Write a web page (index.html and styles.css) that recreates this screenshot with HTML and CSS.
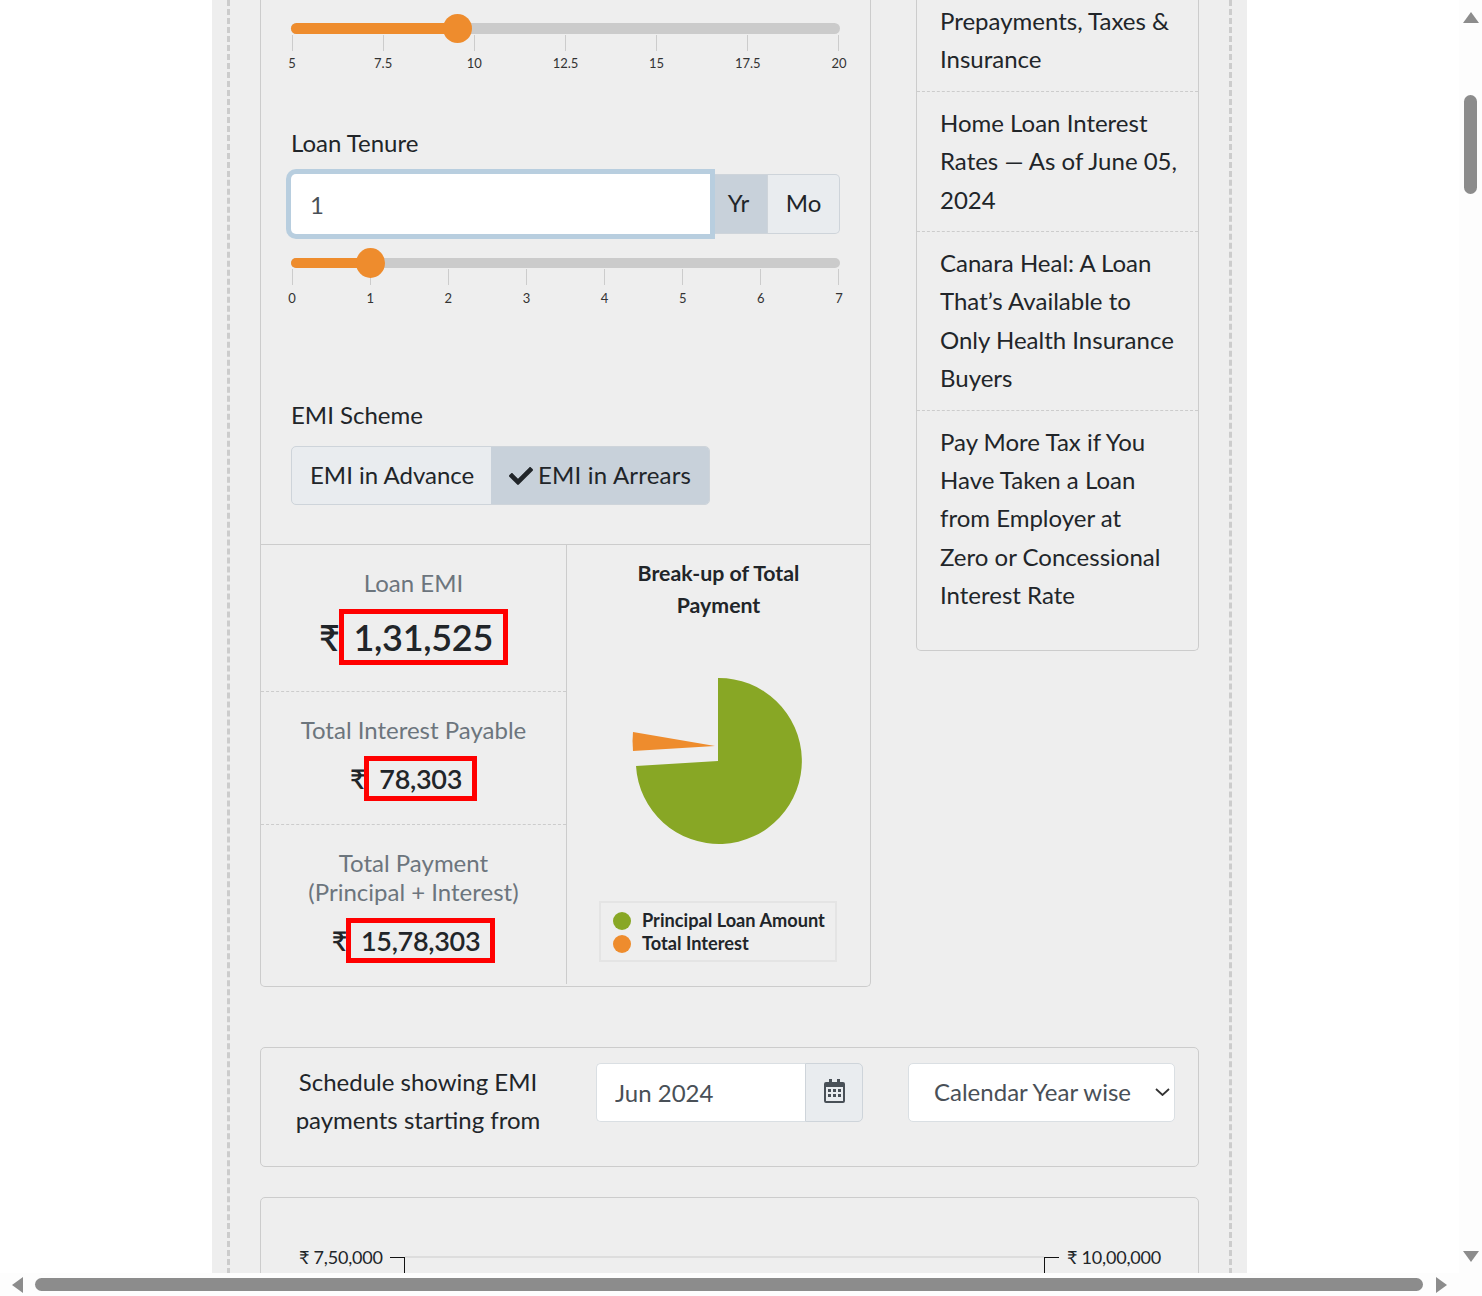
FILE: index.html
```html
<!DOCTYPE html>
<html lang="en">
<head>
  <meta charset="UTF-8">
  <title>EMI Calculator</title>
  <link rel="stylesheet" href="styles.css">
</head>
<body>

<div class="sheet">
  <div class="frame">
    <div class="top-row">

      <div class="calc-card">
        <div class="inputs">
          <div class="slider">
            <div class="track"><div class="fill fill-rate"></div></div>
            <div class="handle handle-rate"></div>
            <div class="ticks">
              <div class="tick"><span>5</span></div>
              <div class="tick"><span>7.5</span></div>
              <div class="tick"><span>10</span></div>
              <div class="tick"><span>12.5</span></div>
              <div class="tick"><span>15</span></div>
              <div class="tick"><span>17.5</span></div>
              <div class="tick"><span>20</span></div>
            </div>
          </div>

          <div class="field-label tenure-label">Loan Tenure</div>
          <div class="tenure-group">
            <input class="tenure-input" type="text" value="1">
            <div class="unit unit-on">Yr</div>
            <div class="unit">Mo</div>
          </div>

          <div class="slider slider-tenure">
            <div class="track"><div class="fill fill-tenure"></div></div>
            <div class="handle handle-tenure"></div>
            <div class="ticks">
              <div class="tick"><span>0</span></div>
              <div class="tick"><span>1</span></div>
              <div class="tick"><span>2</span></div>
              <div class="tick"><span>3</span></div>
              <div class="tick"><span>4</span></div>
              <div class="tick"><span>5</span></div>
              <div class="tick"><span>6</span></div>
              <div class="tick"><span>7</span></div>
            </div>
          </div>

          <div class="field-label scheme-label">EMI Scheme</div>
          <div class="scheme-group">
            <div class="scheme-btn">EMI in Advance</div>
            <div class="scheme-btn scheme-on">
              <svg class="check" viewBox="0 0 512 512"><path d="M173.898 439.404l-166.4-166.4c-9.997-9.997-9.997-26.206 0-36.204l36.203-36.204c9.997-9.998 26.207-9.998 36.204 0L192 312.69 432.095 72.596c9.997-9.997 26.207-9.997 36.204 0l36.203 36.204c9.997 9.997 9.997 26.206 0 36.204l-294.4 294.401c-9.998 9.997-26.207 9.997-36.204-.001z"/></svg>
              EMI in Arrears
            </div>
          </div>
        </div>

        <div class="results">
          <div class="figures">
            <div class="figure figure-emi">
              <div class="figure-label">Loan EMI</div>
              <div class="amount amount-big"><span class="rupee">₹</span><span class="amount-box">1,31,525</span></div>
            </div>
            <div class="figure figure-interest">
              <div class="figure-label">Total Interest Payable</div>
              <div class="amount"><span class="rupee">₹</span><span class="amount-box">78,303</span></div>
            </div>
            <div class="figure figure-total">
              <div class="figure-label">Total Payment<br>(Principal + Interest)</div>
              <div class="amount"><span class="rupee">₹</span><span class="amount-box">15,78,303</span></div>
            </div>
          </div>

          <div class="breakup">
            <div class="breakup-title">Break-up of Total<br>Payment</div>
            <svg class="pie" width="303" height="280" viewBox="0 0 303 280">
              <path fill="#88a725" d="M151 57 A83 83 0 1 1 69 145 L151 140 Z"/>
              <path fill="#ee8c2d" d="M148 125 L66 111 Q65 120 66 130 Z"/>
            </svg>
            <div class="legend">
              <div class="legend-row"><span class="dot dot-green"></span>Principal Loan Amount</div>
              <div class="legend-row"><span class="dot dot-orange"></span>Total Interest</div>
            </div>
          </div>
        </div>
      </div>

      <div class="side-card">
        <div class="side-item">Prepayments, Taxes &amp; Insurance</div>
        <div class="side-item">Home Loan Interest Rates — As of June 05, 2024</div>
        <div class="side-item">Canara Heal: A Loan That’s Available to Only Health Insurance Buyers</div>
        <div class="side-item side-last">Pay More Tax if You Have Taken a Loan from Employer at<br>Zero or Concessional Interest Rate</div>
      </div>
    </div>

    <div class="schedule-card">
      <div class="schedule-text">Schedule showing EMI payments starting from</div>
      <div class="date-group">
        <input class="date-input" type="text" value="Jun 2024">
        <div class="date-addon">
          <svg class="calendar" width="21" height="24" viewBox="0 0 21 24">
            <path fill="#495057" d="M5 0h3v3h5V0h3v3h3a2 2 0 0 1 2 2v17a2 2 0 0 1-2 2H2a2 2 0 0 1-2-2V5a2 2 0 0 1 2-2h3z"/>
            <rect x="2" y="8" width="17" height="14" fill="#e9ecef"/>
            <path fill="#495057" d="M4 10h3v3H4zM9 10h3v3H9zM14 10h3v3h-3zM4 15h3v3H4zM9 15h3v3H9zM14 15h3v3h-3z"/>
          </svg>
        </div>
      </div>
      <div class="select-wrap">
        <select class="year-select">
          <option>Calendar Year wise</option>
          <option>Financial Year wise</option>
        </select>
        <svg class="chevron" width="15" height="8" viewBox="0 0 15 8"><path d="M1 1l6.500 6L14 1" fill="none" stroke="#333" stroke-width="1.800"/></svg>
      </div>
    </div>

    <div class="chart-card">
      <div class="axis">
        <span class="axis-label">₹ 7,50,000</span>
        <div class="axis-tick axis-tick-left"></div>
        <div class="axis-line"></div>
        <div class="axis-tick axis-tick-right"></div>
        <span class="axis-label">₹ 10,00,000</span>
      </div>
    </div>
  </div>
</div>

<!-- the window's scrollbars -->
<div class="vbar">
  <div class="arrow-up"></div>
  <div class="vthumb"></div>
  <div class="arrow-down"></div>
</div>
<div class="hbar">
  <div class="arrow-left"></div>
  <div class="hthumb"></div>
  <div class="arrow-right"></div>
</div>

</body>
</html>
```

FILE: styles.css
```css
html, body {
  margin: 0;
  height: 1296px;
  overflow: hidden;
}
body {
  position: relative;
  background: white;
  font-family: Lato, "Noto Sans", sans-serif;
  font-size: 24px;
  line-height: 38.4px;
  color: #212529;
}
* {
  box-sizing: border-box;
}
.sheet {
  margin-left: 212px;
  width: 1035px;
  height: 1273px;
  overflow: hidden;
  background: #eeeeee;
  padding: 0 15px;
}
.frame {
  height: 1400px;
  border-left: 3px dashed #cccccc;
  border-right: 3px dashed #cccccc;
  padding: 0 30px;
}
.top-row {
  display: flex;
  align-items: flex-start;
  gap: 45px;
}

/* main calculator card */
.calc-card {
  width: 611px;
  height: 987px;
  border: 1px solid #cccccc;
  border-top: none;
  border-radius: 0 0 5px 5px;
}
.inputs {
  height: 544px;
  padding: 14px 30px 0;
}
.slider {
  position: relative;
  width: 549px;
  padding-top: 21px;
}
.slider-tenure {
  margin-top: 14px;
}
.track {
  position: absolute;
  top: 9px;
  left: 0;
  width: 549px;
  height: 11px;
  border-radius: 6px;
  background: #cbcbcb;
}
.slider-tenure .track {
  top: 10px;
  height: 10px;
}
.fill {
  height: 100%;
  border-radius: 6px;
  background: #ee8c2d;
}
.fill-rate {
  width: 167px;
}
.fill-tenure {
  width: 80px;
}
.handle {
  position: absolute;
  top: 0;
  width: 29px;
  height: 29px;
  border-radius: 50%;
  background: #ee8c2d;
}
.slider-tenure .handle {
  height: 30px;
}
.handle-rate {
  left: 152px;
}
.handle-tenure {
  left: 65px;
}
.ticks {
  display: flex;
  justify-content: space-between;
  padding: 0 1px;
}
.tick {
  width: 0;
  display: flex;
  flex-direction: column;
  align-items: center;
  font-size: 13px;
  line-height: 16px;
  color: #333333;
}
.tick::before {
  content: "";
  flex: none;
  width: 1px;
  height: 16px;
  margin-bottom: 4px;
  background: #cccccc;
}
.slider-tenure .tick::before {
  margin-bottom: 5px;
}
.field-label {
  height: 38px;
  margin-bottom: 12px;
}
.tenure-label {
  margin-top: 53px;
}
.scheme-label {
  margin-top: 90px;
}
.tenure-group {
  display: flex;
  width: 549px;
  height: 60px;
}
.tenure-input {
  position: relative;
  width: 419px;
  height: 60px;
  padding: 0 18px 0 19px;
  border: none;
  border-radius: 5px 0 0 5px;
  box-shadow: 0 0 0 5px #b8cedf;
  outline: none;
  font: inherit;
  color: #495057;
  background: white;
}
.unit {
  display: flex;
  align-items: center;
  justify-content: center;
  width: 72px;
  padding-bottom: 2px;
  border: 1px solid #ced4da;
  border-left: none;
  border-radius: 0 5px 5px 0;
  background: #e9ecef;
}
.unit-on {
  width: 58px;
  border-radius: 0;
  background: #c8d1da;
}
.scheme-group {
  display: flex;
  width: 419px;
  height: 59px;
  border: 1px solid #ced4da;
  border-radius: 5px;
  background: #e9ecef;
  overflow: hidden;
}
.scheme-btn {
  display: flex;
  align-items: center;
  padding-left: 18px;
  width: 199px;
  white-space: nowrap;
}
.scheme-on {
  flex: 1;
  gap: 5px;
  letter-spacing: 0.2px;
  background: #c8d1da;
}
.check {
  width: 24px;
  height: 24px;
  fill: #212529;
}

/* results under the inputs */
.results {
  display: flex;
  height: 440px;
  border-top: 1px solid #cccccc;
}
.figures {
  width: 306px;
  border-right: 1px solid #cccccc;
}
.figure {
  padding-top: 23px;
  text-align: center;
}
.figure-emi {
  height: 147px;
  border-bottom: 1px dashed #cccccc;
}
.figure-interest {
  height: 133px;
  border-bottom: 1px dashed #cccccc;
}
.figure-label {
  line-height: 29px;
  color: #6c757d;
}
.amount {
  display: flex;
  justify-content: center;
  align-items: center;
  margin-top: 12px;
  font-size: 27px;
  font-weight: 600;
  letter-spacing: -0.3px;
  line-height: 35px;
}
.amount-big {
  font-size: 36px;
  line-height: 46px;
}
.amount-box {
  border: 5px solid red;
  padding: 0 10px;
  margin-left: -1px;
}
.breakup {
  flex: 1;
  padding-top: 12px;
  text-align: center;
}
.breakup-title {
  font-size: 21.3px;
  font-weight: 700;
  line-height: 32px;
}
.pie {
  display: block;
}
.legend {
  width: 238px;
  height: 61px;
  margin-left: 32px;
  padding: 6px 0 0 12px;
  border: 2px solid #e4e4e4;
  font-size: 18.200px;
  font-weight: 700;
  line-height: 23px;
  text-align: left;
}
.legend-row {
  display: flex;
  align-items: center;
  gap: 11px;
}
.dot {
  width: 18px;
  height: 18px;
  border-radius: 50%;
}
.dot-green {
  background: #88a725;
}
.dot-orange {
  background: #ee8c2d;
}

/* sidebar list */
.side-card {
  width: 283px;
  height: 651px;
  border: 1px solid #cccccc;
  border-top: none;
  border-radius: 0 0 5px 5px;
}
.side-item {
  padding: 2px 20px 12px 23px;
  border-bottom: 1px dashed #cccccc;
}
.side-item + .side-item {
  padding-top: 12px;
}
.side-last {
  border-bottom: none;
}

/* schedule controls */
.schedule-card {
  display: flex;
  align-items: flex-start;
  height: 120px;
  margin-top: 60px;
  padding: 15px 23px 0 21px;
  border: 1px solid #cccccc;
  border-radius: 5px;
}
.schedule-text {
  width: 272px;
  padding: 0 4px;
  text-align: center;
}
.date-group {
  display: flex;
  width: 267px;
  height: 59px;
  margin-left: 42px;
}
.date-input {
  width: 209px;
  height: 59px;
  padding: 0 18px;
  border: 1px solid #dadfe3;
  border-right: none;
  border-radius: 5px 0 0 5px;
  outline: none;
  font: inherit;
  color: #495057;
  background: white;
}
.date-addon {
  flex: 1;
  display: flex;
  align-items: center;
  justify-content: center;
  padding-bottom: 3px;
  border: 1px solid #ced4da;
  border-radius: 0 5px 5px 0;
  background: #e9ecef;
}
.select-wrap {
  position: relative;
  margin-left: 45px;
}
.year-select {
  display: block;
  width: 267px;
  height: 59px;
  padding: 0 0 0 25px;
  border: 1px solid #dadfe3;
  border-radius: 5px;
  outline: none;
  font: inherit;
  color: #495057;
  background: white;
  appearance: none;
}
.chevron {
  position: absolute;
  top: 25px;
  right: 5px;
  pointer-events: none;
}

/* chart, cut off by the window */
.chart-card {
  height: 200px;
  margin-top: 30px;
  padding: 48px 37px 0 38px;
  border: 1px solid #cccccc;
  border-radius: 5px;
}
.axis {
  display: flex;
  align-items: flex-start;
  font-size: 18px;
  line-height: 22px;
}
.axis-label {
  white-space: nowrap;
  letter-spacing: -0.2px;
}
.axis-tick {
  width: 15px;
  height: 30px;
  margin-top: 11px;
  border-top: 1px solid #111111;
}
.axis-tick-left {
  margin-left: 7px;
  border-right: 1px solid #111111;
}
.axis-tick-right {
  margin-right: 8px;
  border-left: 1px solid #111111;
}
.axis-line {
  flex: 1;
  height: 2px;
  margin-top: 10px;
  background: #dddddd;
}

/* scrollbars */
.vbar {
  position: absolute;
  top: 0;
  right: 0;
  width: 23px;
  height: 1273px;
  background: #fdfdfd;
}
.vthumb {
  position: absolute;
  top: 95px;
  left: 5px;
  width: 13px;
  height: 99px;
  border-radius: 7px;
  background: #8c8c8c;
}
.arrow-up, .arrow-down {
  position: absolute;
  left: 4px;
  width: 0;
  height: 0;
  border-left: 8px solid transparent;
  border-right: 8px solid transparent;
}
.arrow-up {
  top: 12px;
  border-bottom: 11px solid #8c8c8c;
}
.arrow-down {
  top: 1251px;
  border-top: 11px solid #8c8c8c;
}
.hbar {
  position: absolute;
  left: 0;
  bottom: 0;
  width: 100%;
  height: 23px;
  background: #fdfdfd;
}
.hthumb {
  position: absolute;
  top: 5px;
  left: 35px;
  width: 1388px;
  height: 13px;
  border-radius: 7px;
  background: #8c8c8c;
}
.arrow-left, .arrow-right {
  position: absolute;
  top: 4px;
  width: 0;
  height: 0;
  border-top: 8px solid transparent;
  border-bottom: 8px solid transparent;
}
.arrow-left {
  left: 12px;
  border-right: 11px solid #8c8c8c;
}
.arrow-right {
  left: 1436px;
  border-left: 11px solid #8c8c8c;
}
```
